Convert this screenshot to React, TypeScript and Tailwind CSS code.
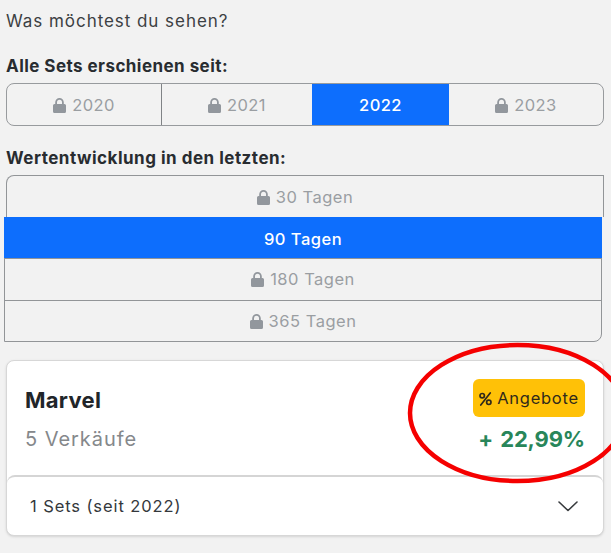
import { clsx } from "clsx";

const years = [
  { label: "2020", width: "w-[155px]" },
  { label: "2021", width: "w-[150px]" },
  { label: "2022", width: "w-[137px]", active: true },
  { label: "2023", width: "w-[154px]" },
];

const periods = [
  { label: "30 Tagen", box: "ml-[6px] h-[42px] w-[598px] rounded-tl-lg border border-b-0 pt-px" },
  { label: "90 Tagen", box: "ml-1 h-[41px] w-[598px]", active: true },
  { label: "180 Tagen", box: "ml-1 h-[43px] w-[598px] border" },
  { label: "365 Tagen", box: "ml-1 h-[42px] w-[598px] rounded-br-lg border -mt-px" },
];

function Lock() {
  return (
    <svg viewBox="0 0 13 15" className="h-[15px] w-[13px] shrink-0 fill-[#92979d]">
      <path
        fillRule="evenodd"
        d="M2.200 6V4.300a4.300 4.300 0 0 1 8.600 0V6h.7A1.500 1.500 0 0 1 13 7.500v6A1.500 1.500 0 0 1 11.500 15h-10A1.500 1.500 0 0 1 0 13.500v-6A1.500 1.500 0 0 1 1.500 6ZM4 6h5V4.300a2.500 2.500 0 0 0-5 0Z"
      />
    </svg>
  );
}

function YearPicker() {
  return (
    <div className="ml-[6px] flex h-[43px] w-[598px] overflow-hidden rounded-lg border border-[#989b9e]">
      {years.map((y, i) => (
        <button
          key={y.label}
          className={clsx(
            "-my-px flex shrink-0 items-center justify-center gap-[6px] pt-px text-[16.5px] tracking-[0.4px]",
            y.width,
            i === 0 && "border-r border-[#808386]",
            y.active ? "bg-[#0d6efd] font-medium text-white" : "text-[#9a9ea2]"
          )}
        >
          {!y.active && <Lock />}
          {y.label}
        </button>
      ))}
    </div>
  );
}

function PeriodPicker() {
  return (
    <div className="flex flex-col">
      {periods.map((p) => (
        <button
          key={p.label}
          className={clsx(
            "flex items-center justify-center gap-[6px] border-[#929598] text-[16.5px] tracking-[0.5px]",
            p.box,
            p.active ? "bg-[#0d6efd] pt-[3px] font-medium text-white" : "text-[#9a9ea2]"
          )}
        >
          {!p.active && <Lock />}
          {p.label}
        </button>
      ))}
    </div>
  );
}

function ThemeCard() {
  return (
    <div className="mt-[18px] ml-[6px] h-[176px] w-[598px] rounded-lg border border-[#d7d7d7] bg-white shadow-sm">
      <div className="flex h-[114px] justify-between px-[18px]">
        <div className="flex flex-col pt-[22px]">
          <h2 className="text-[22px] leading-[34px] font-bold tracking-[0.3px] text-[#212529]">Marvel</h2>
          <p className="mt-[7px] text-[20px] leading-[30px] tracking-[0.95px] text-[#85888b]">5 Verkäufe</p>
        </div>
        <div className="flex flex-col items-end pt-[18px]">
          <button className="flex h-[38px] w-[112px] items-center justify-center gap-[5px] rounded-md bg-[#ffc107] pt-px text-[16.5px] tracking-[0.75px] text-[#30291b]">
            <svg viewBox="0 0 13 14" className="h-[14px] w-[13px] shrink-0 fill-none stroke-current">
              <circle cx="3.200" cy="3.700" r="2.200" strokeWidth="1.700" />
              <circle cx="9.800" cy="10.300" r="2.200" strokeWidth="1.700" />
              <path d="M11.200 1 1.800 13" strokeWidth="1.700" strokeLinecap="round" />
            </svg>
            Angebote
          </button>
          <span className="mt-[6px] text-[22px] leading-[32px] font-bold tracking-[-0.15px] [word-spacing:2px] text-[#28865a]">
            + 22,99%
          </span>
        </div>
      </div>
      <button className="flex h-[60px] w-full items-center justify-between rounded-lg border-t-2 border-[#d5d5d5] pr-[25px] pl-[23px] text-[16.5px] tracking-[0.9px] text-[#34383c]">
        1 Sets (seit 2022)
        <svg viewBox="0 0 20 11" className="h-[11px] w-5 fill-none stroke-[#383b3e] stroke-[1.6]">
          <path d="M1 1l9 8.500L19 1" strokeLinecap="round" strokeLinejoin="round" />
        </svg>
      </button>
    </div>
  );
}

export default function App() {
  return (
    <div className="relative h-[553px] w-[611px] overflow-hidden bg-[#f2f2f2] font-['Inter',sans-serif]">
      <p className="ml-[6px] pt-[9px] text-[17px] leading-[24px] tracking-[0.95px] text-[#3c4043]">
        Was möchtest du sehen?
      </p>
      <h3 className="mt-[21px] ml-[6px] text-[17px] leading-[24px] font-bold tracking-[0.45px] text-[#282c30]">
        Alle Sets erschienen seit:
      </h3>
      <div className="pt-[5px]">
        <YearPicker />
      </div>
      <h3 className="mt-5 ml-[6px] text-[17px] leading-[24px] font-bold tracking-[0.5px] text-[#282c30]">
        Wertentwicklung in den letzten:
      </h3>
      <div className="pt-[5px]">
        <PeriodPicker />
      </div>
      <ThemeCard />
      {/* highlight around the offers */}
      <svg
        viewBox="0 0 611 553"
        className="pointer-events-none absolute inset-0 h-[553px] w-[611px] fill-none stroke-[#f50000] stroke-[4.5]"
      >
        <ellipse cx="517.500" cy="413" rx="107.500" ry="68" />
      </svg>
    </div>
  );
}
